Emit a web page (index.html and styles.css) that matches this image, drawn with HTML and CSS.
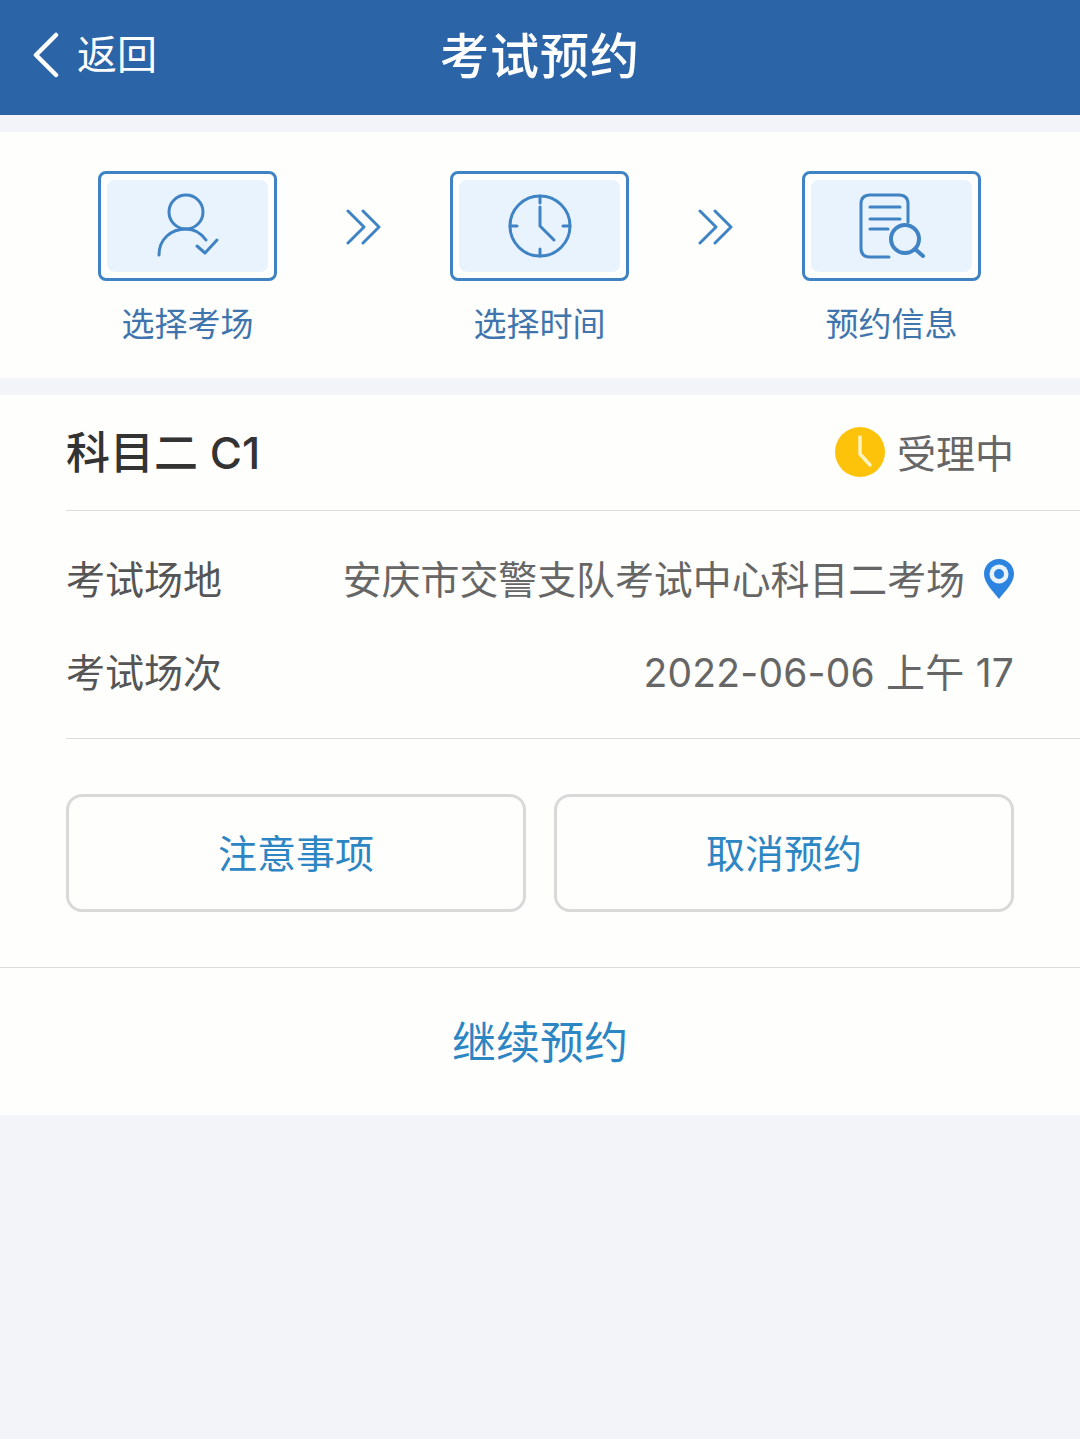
FILE: index.html
```html
<!DOCTYPE html>
<html lang="zh-CN">
<head>
    <meta charset="UTF-8">
    <meta name="viewport" content="width=device-width, initial-scale=1.0">
    <title>考试预约</title>
    <link rel="stylesheet" href="styles.css">
</head>
<body>
    <header class="topbar">
        <a class="back">
            <svg class="back-icon" width="28" height="46" viewBox="0 0 28 46">
                <path d="M25 3 L5 23 L25 43" />
            </svg>
            <span>返回</span>
        </a>
        <h1>考试预约</h1>
    </header>

    <section class="steps">
        <div class="step">
            <div class="step-box">
                <div class="step-inner">
                    <svg width="70" height="70" viewBox="0 0 70 70">
                        <circle cx="33" cy="21" r="17" />
                        <path d="M6 64 C6 48 18 38 33 38 C41 38 48 42 53 49" />
                        <path d="M44 55 L52 62 L64 49" />
                    </svg>
                </div>
            </div>
            <p>选择考场</p>
        </div>
        <svg class="arrows" width="36" height="36" viewBox="0 0 36 36">
            <path d="M2 2 L18 18 L2 34" />
            <path d="M17 2 L33 18 L17 34" />
        </svg>
        <div class="step">
            <div class="step-box">
                <div class="step-inner">
                    <svg width="66" height="66" viewBox="0 0 66 66">
                        <circle cx="33" cy="33" r="30" />
                        <path d="M33 3 V10 M33 56 V63 M3 33 H10 M56 33 H63" />
                        <path d="M33 14 V33 L47 47" />
                    </svg>
                </div>
            </div>
            <p>选择时间</p>
        </div>
        <svg class="arrows" width="36" height="36" viewBox="0 0 36 36">
            <path d="M2 2 L18 18 L2 34" />
            <path d="M17 2 L33 18 L17 34" />
        </svg>
        <div class="step">
            <div class="step-box">
                <div class="step-inner">
                    <svg width="66" height="66" viewBox="0 0 66 66">
                        <path d="M49 29 V11 Q49 2 40 2 H11 Q2 2 2 11 V55 Q2 64 11 64 H30" />
                        <path d="M11 14 H41 M11 26 H41 M11 36 H29" />
                        <circle class="lens" cx="46" cy="46" r="14" />
                        <path class="lens" d="M56 56 L64 63" />
                    </svg>
                </div>
            </div>
            <p>预约信息</p>
        </div>
    </section>

    <section class="card">
        <div class="card-head">
            <h2>科目二 C1</h2>
            <div class="status">
                <svg width="50" height="50" viewBox="0 0 50 50">
                    <circle class="status-bg" cx="25" cy="25" r="25" />
                    <path class="status-hand" d="M25 10 V27 L35 38" />
                </svg>
                <span>受理中</span>
            </div>
        </div>
        <div class="info">
            <div class="info-row">
                <span class="info-label">考试场地</span>
                <span class="info-value">
                    安庆市交警支队考试中心科目二考场
                    <svg class="pin" width="32" height="40" viewBox="0 0 32 40">
                        <path class="pin-body" d="M16 0 C7 0 1 7 1 15 C1 24 10 32 16 40 C22 32 31 24 31 15 C31 7 25 0 16 0 Z" />
                        <circle class="pin-ring" cx="16" cy="15" r="9.5" />
                        <circle class="pin-body" cx="16" cy="15" r="5" />
                    </svg>
                </span>
            </div>
            <div class="info-row">
                <span class="info-label">考试场次</span>
                <span class="info-value info-date">2022-06-06 上午 17</span>
            </div>
        </div>
        <div class="actions">
            <button class="btn">注意事项</button>
            <button class="btn">取消预约</button>
        </div>
        <div class="continue">继续预约</div>
    </section>
</body>
</html>
```

FILE: styles.css
```css
* {
    margin: 0;
    padding: 0;
    box-sizing: border-box;
}

body {
    font-family: Inter, "Noto Sans CJK SC", "Noto Sans", sans-serif;
    background: #f3f4fa;
    min-height: 100vh;
}

.topbar {
    position: relative;
    height: 115px;
    padding-bottom: 10px;
    background: #2c64a8;
    color: #fff;
    display: flex;
    align-items: center;
    justify-content: center;
}

.topbar h1 {
    font-size: 49px;
    font-weight: 500;
    letter-spacing: 1px;
}

.back {
    position: absolute;
    left: 31px;
    top: 32px;
    display: flex;
    align-items: center;
    gap: 18px;
    font-size: 40px;
    line-height: 46px;
}

.back-icon path {
    fill: none;
    stroke: #fff;
    stroke-width: 4.5;
    stroke-linecap: round;
    stroke-linejoin: round;
}

.steps {
    margin-top: 17px;
    height: 246px;
    background: #fefefd;
    padding: 39px 99px 0 98px;
    display: flex;
    justify-content: space-between;
    align-items: flex-start;
}

.step {
    width: 179px;
    text-align: center;
}

.step-box {
    height: 110px;
    border: 3px solid #3f83c4;
    border-radius: 8px;
    padding: 6px;
}

.step-inner {
    height: 92px;
    background: #e9f3fd;
    border-radius: 8px;
    display: flex;
    align-items: center;
    justify-content: center;
}

.step-inner svg * {
    fill: none;
    stroke: #3f83c4;
    stroke-width: 3;
    stroke-linecap: round;
    stroke-linejoin: round;
}

.step-inner svg .lens {
    stroke-width: 4;
}

.step p {
    margin-top: 21px;
    font-size: 33px;
    line-height: 44px;
    color: #3f75ac;
}

.arrows {
    margin-top: 38px;
}

.arrows path {
    fill: none;
    stroke: #3f83c4;
    stroke-width: 3;
    stroke-linecap: round;
    stroke-linejoin: round;
}

.card {
    margin-top: 17px;
    background: #fefefd;
    height: 720px;
}

.card-head {
    height: 116px;
    margin-left: 66px;
    padding-right: 66px;
    border-bottom: 1px solid #dcdcdc;
    display: flex;
    align-items: center;
    justify-content: space-between;
}

.card-head h2 {
    font-size: 44px;
    font-weight: 500;
    color: #333;
    padding-bottom: 6px;
}

.status {
    display: flex;
    align-items: center;
    gap: 12px;
    font-size: 39px;
    color: #666;
}

.status svg {
    margin-bottom: 2px;
}

.status span {
    padding-bottom: 4px;
}

.status-bg {
    fill: #fdc30b;
}

.status-hand {
    fill: none;
    stroke: #fff3c0;
    stroke-width: 3.5;
    stroke-linecap: round;
    stroke-linejoin: round;
}

.info {
    height: 228px;
    margin-left: 66px;
    padding: 23px 66px 0 0;
    border-bottom: 1px solid #dcdcdc;
}

.info-row {
    height: 93px;
    padding-bottom: 8px;
    display: flex;
    align-items: center;
    justify-content: space-between;
    font-size: 38.9px;
}

.info-label {
    color: #555;
    font-size: 39px;
}

.info-value {
    color: #666;
    display: flex;
    align-items: center;
    gap: 18px;
}

.info-date {
    font-size: 39px;
    letter-spacing: 0.2px;
}

.pin {
    margin-top: 4px;
    margin-right: -1px;
}

.pin-body {
    fill: #2d84e0;
}

.pin-ring {
    fill: #e9f3fd;
}

.actions {
    height: 229px;
    padding: 55px 66px 0;
    border-bottom: 1px solid #dcdcdc;
    display: flex;
    gap: 28px;
}

.btn {
    flex: 1;
    height: 118px;
    padding-bottom: 4px;
    background: #fefefd;
    border: 3px solid #d9d9d9;
    border-radius: 16px;
    font-family: inherit;
    font-size: 39px;
    color: #2d86c4;
}

.continue {
    height: 147px;
    padding-bottom: 4px;
    display: flex;
    align-items: center;
    justify-content: center;
    font-size: 44px;
    color: #2d86c4;
}
```
